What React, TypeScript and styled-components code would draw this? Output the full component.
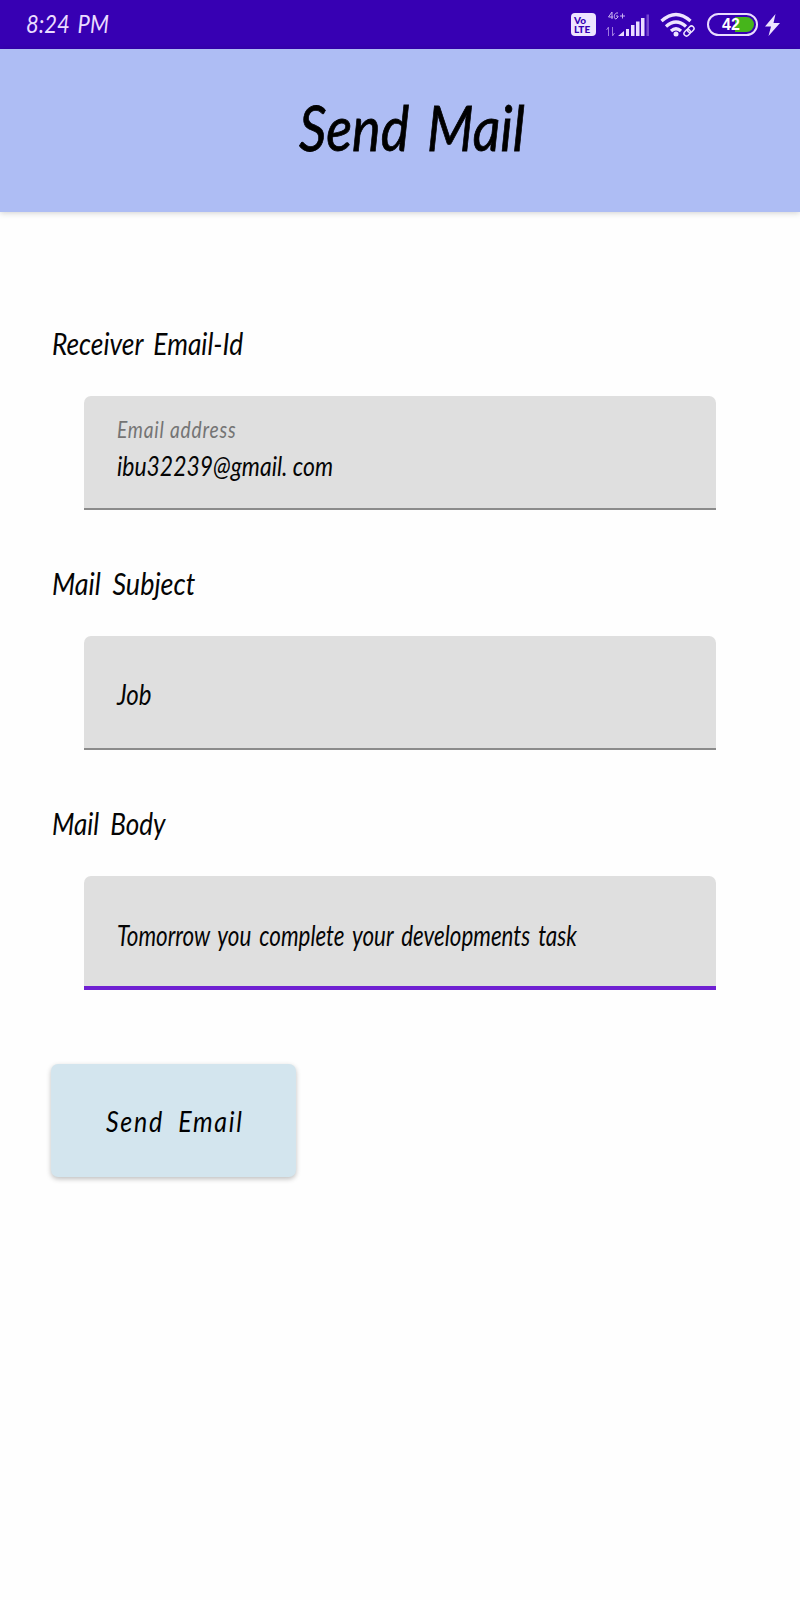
import React from 'react';
import styled, { createGlobalStyle } from 'styled-components';

const GlobalStyle = createGlobalStyle`
  *, *::before, *::after { box-sizing: border-box; }
  body {
    margin: 0;
    background: #fefefe;
    color: #050505;
    font-family: Lato, "Open Sans", sans-serif;
    font-style: italic;
  }
`;

const Screen = styled.div`
  display: flex;
  flex-direction: column;
  min-height: 1600px;
  overflow: hidden;
`;

/* Narrow slanted lettering; $squeeze condenses the glyphs horizontally. */
const Lettering = styled.span<{
  $size: number;
  $squeeze: number;
  $line: number;
  $spacing?: number;
  $gap?: number;
}>`
  display: block;
  width: max-content;
  font-size: ${p => p.$size}px;
  line-height: ${p => p.$line}px;
  letter-spacing: ${p => p.$spacing ?? 0}px;
  word-spacing: ${p => p.$gap ?? 0}px;
  white-space: pre;
  transform: scaleX(${p => p.$squeeze});
  transform-origin: left center;
`;

const StatusBar = styled.div`
  display: flex;
  align-items: center;
  justify-content: space-between;
  height: 49px;
  padding: 0 20px 0 26px;
  background: #3700b3;
  color: #eadcff;
`;

const Clock = styled.div`
  padding-bottom: 3px;
`;

const StatusIcons = styled.div`
  display: flex;
  align-items: center;
`;

const VoLte = styled.div`
  display: flex;
  flex-direction: column;
  justify-content: center;
  width: 25px;
  height: 23px;
  margin-right: 9px;
  padding-left: 3px;
  border-radius: 4px;
  background: #eee4ff;
  color: #3700b3;
  font: 900 10px/9px Lato, sans-serif;
`;

const Signal = styled.div`
  width: 44px;
  height: 28px;
  margin-right: 11px;
  svg { display: block; }
`;

const Wifi = styled.svg`
  display: block;
  margin-right: 11px;
`;

const Battery = styled.div`
  display: flex;
  align-items: center;
  width: 51px;
  height: 23px;
  margin-right: 7px;
  padding: 2px 2px 2px 13px;
  border: 2px solid #eadcff;
  border-radius: 12px;
  color: #fff;
  font: 700 16px/16px "Liberation Sans", sans-serif;
`;

const Charge = styled.span`
  flex: 1;
  height: 15px;
  margin-left: -5px;
  border-radius: 0 8px 8px 0;
  background: #46b51b;
`;

const Percent = styled.span`
  position: relative;
  z-index: 1;
`;

const AppBar = styled.header`
  display: flex;
  align-items: flex-start;
  height: 163px;
  padding: 43px 0 0 299px;
  background: #aebdf4;
  box-shadow: 0 1px 6px rgba(0, 0, 0, 0.18);
`;

const Title = styled.h1`
  margin: 0;
  font-weight: 400;
  color: #000;
  -webkit-text-stroke: 0.8px #000;
`;

const Form = styled.main`
  display: flex;
  flex-direction: column;
  align-items: flex-start;
  padding: 111px 84px 0 52px;
`;

const Group = styled.section`
  display: flex;
  flex-direction: column;
  width: 100%;
  height: 240px;
`;

const Field = styled.div<{ $active?: boolean; $filled?: boolean }>`
  display: flex;
  flex-direction: column;
  justify-content: center;
  height: 114px;
  margin: 33px 0 0 32px;
  padding: ${p => (p.$active ? 7 : 3)}px 0 ${p => (p.$filled ? 12 : 0)}px 33px;
  border-bottom: ${p => (p.$active ? '4px solid #6f20d2' : '2px solid #8b8b8b')};
  border-radius: 7px 7px 0 0;
  background: #dfdfdf;
`;

const Hint = styled.div`
  color: #747474;
`;

const SendButton = styled.button`
  display: flex;
  align-items: center;
  width: 245px;
  height: 113px;
  margin: 21px 0 0 -1px;
  padding: 0 0 0 55px;
  border: 0;
  border-radius: 7px;
  background: #d3e5ee;
  box-shadow: 0 2px 5px rgba(0, 0, 0, 0.25);
  color: #000;
  font: inherit;
`;

function SignalIcon() {
  return (
    <svg width="44" height="28" viewBox="0 0 44 28" fill="#eadcff">
      <g stroke="#cbb4f2" strokeWidth="1" fill="none">
        <path d="M7 1 3.500 6H8M7 1v7M13 2C9 1 8 8 11 8l2-2v-1h-2M15 5h5M17.500 2.500v5" />
        <path d="M3.500 25V16l-2 3M7.500 16v9l2-3" stroke="#9d79df" />
      </g>
      <path d="M13 25 19 20V25zM21 18h3v7h-3zM26 14h3.500v11H26zM31 10.500h3.500V25H31zM36 7h3.500v18H36z" />
      <path d="M41.500 3.500H44V25h-2.500z" fill="#7546cf" />
    </svg>
  );
}

function WifiIcon() {
  return (
    <Wifi width="36" height="26" viewBox="0 0 36 26" fill="none" stroke="#eee4ff" strokeWidth="3.300">
      <path d="M1.500 9Q16 -4 30.500 9M6 14.500Q16 5.500 26 14.500M11 19Q16 14.500 21 19" />
      <circle cx="16" cy="22" r="2.500" fill="#eee4ff" stroke="none" />
      <g strokeWidth="1.500" transform="rotate(-45 29 19)">
        <rect x="23" y="16.500" width="7" height="5" rx="2.500" />
        <rect x="28" y="16.500" width="7" height="5" rx="2.500" />
      </g>
    </Wifi>
  );
}

export default function App() {
  return (
    <Screen>
      <GlobalStyle />
      <StatusBar>
        <Clock>
          <Lettering $size={25} $squeeze={0.88} $line={46} $gap={3}>8:24 PM</Lettering>
        </Clock>
        <StatusIcons>
          <VoLte><span>Vo</span><span>LTE</span></VoLte>
          <Signal><SignalIcon /></Signal>
          <WifiIcon />
          <Battery>
            <Percent>42</Percent>
            <Charge />
          </Battery>
          <svg width="15" height="22" viewBox="0 0 15 22" fill="#eee4ff">
            <path d="M10.500 0 0 12.500H6L3.500 22 15 9H8.500z" />
          </svg>
        </StatusIcons>
      </StatusBar>
      <AppBar>
        <Title>
          <Lettering $size={62} $squeeze={0.87} $line={70} $gap={6}>Send Mail</Lettering>
        </Title>
      </AppBar>
      <Form>
        <Group>
          <Lettering $size={31} $squeeze={0.85} $line={40} $gap={5}>Receiver Email-Id</Lettering>
          <Field $filled>
            <Hint>
              <Lettering $size={24} $squeeze={0.8} $line={36} $spacing={1}>Email address</Lettering>
            </Hint>
            <Lettering $size={27} $squeeze={0.85} $line={38}>ibu32239@gmail. com</Lettering>
          </Field>
        </Group>
        <Group>
          <Lettering $size={31} $squeeze={0.87} $line={40} $gap={6}>Mail Subject</Lettering>
          <Field>
            <Lettering $size={28} $squeeze={0.86} $line={38}>Job</Lettering>
          </Field>
        </Group>
        <Group>
          <Lettering $size={31} $squeeze={0.84} $line={40} $gap={6}>Mail Body</Lettering>
          <Field $active>
            <Lettering $size={28} $squeeze={0.8} $line={38} $gap={3.5}>Tomorrow you complete your developments task</Lettering>
          </Field>
        </Group>
        <SendButton>
          <Lettering $size={29} $squeeze={0.86} $line={40} $spacing={2} $gap={8}>Send Email</Lettering>
        </SendButton>
      </Form>
    </Screen>
  );
}
